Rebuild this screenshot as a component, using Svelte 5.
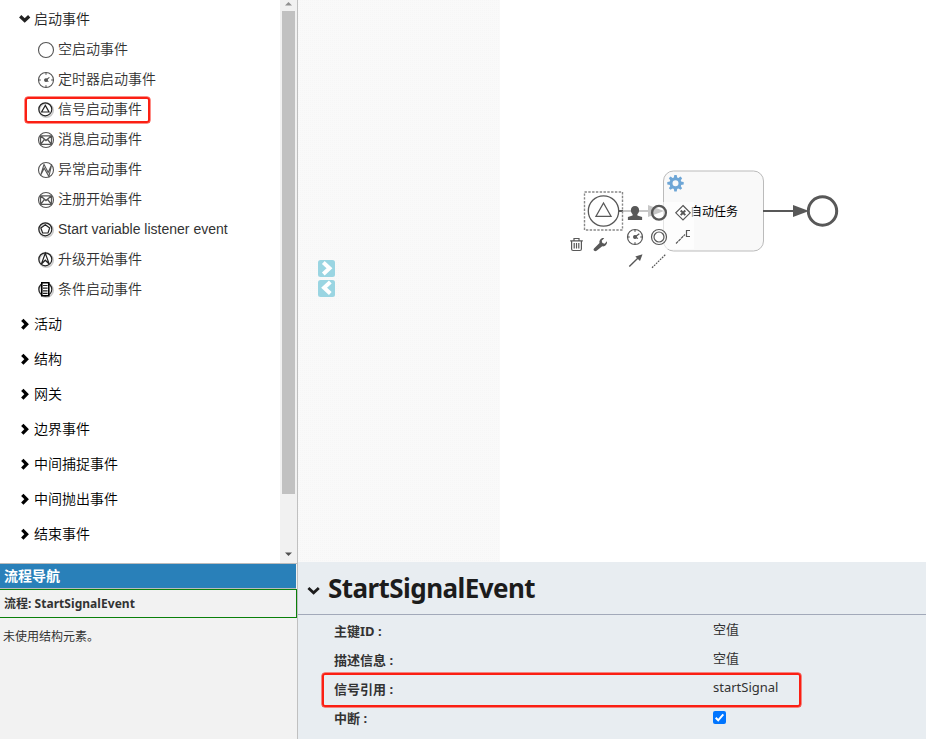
<script>
  const events = [
    { kind: 'none', label: '空启动事件' },
    { kind: 'timer', label: '定时器启动事件' },
    { kind: 'signal', label: '信号启动事件', marked: true },
    { kind: 'message', label: '消息启动事件' },
    { kind: 'error', label: '异常启动事件' },
    { kind: 'message', label: '注册开始事件' },
    { kind: 'variable', label: 'Start variable listener event' },
    { kind: 'escalation', label: '升级开始事件' },
    { kind: 'condition', label: '条件启动事件' }
  ];
  const groups = ['活动', '结构', '网关', '边界事件', '中间捕捉事件', '中间抛出事件', '结束事件'];
  const props = [
    { label: '主键ID :', value: '空值' },
    { label: '描述信息 :', value: '空值' },
    { label: '信号引用 :', value: 'startSignal', marked: true },
    { label: '中断 :', check: true }
  ];
  const teeth = [0, 45, 90, 135, 180, 225, 270, 315];
  const ticks = [0, 90, 180, 270];
  const dark = ['signal', 'variable', 'escalation', 'condition'];
</script>

<div class="app">
  <div class="left">
    <div class="palette">
      <div class="tree">
        <div class="row root">
          <svg class="chev" width="12" height="12" viewBox="0 0 12 12"><path d="M1.2 3.2 5.7 7.4l4.5-4.2" /></svg>
          <span>启动事件</span>
        </div>
        {#each events as e}
          <div class="row item">
            {#if e.marked}<div class="mark"></div>{/if}
            <svg class="ico" class:dark={dark.includes(e.kind)} width="18" height="18" viewBox="0 0 18 18">
              {#if dark.includes(e.kind)}
                <circle class="shade" cx="9.3" cy="9.3" r="6.9" />
                <circle cx="8.3" cy="8.3" r="6.5" />
              {:else}
                <circle cx="9" cy="9" r="7.5" />
              {/if}
              {#if e.kind === 'timer'}
                {#each ticks as t}<path d="M9 1.5v2.3" transform="rotate({t} 9 9)" />{/each}
                <path d="M12.4 6.4 9 9l2.4 1.6" />
                <circle class="fill" cx="9" cy="9.1" r="1.4" />
              {:else if e.kind === 'signal'}
                <path d="M8.3 4.4 12 11H4.6Z" />
              {:else if e.kind === 'message'}
                <path stroke-width="1.3" d="M3.5 4.8h11v8.6h-11ZM3.5 4.8 9 9.6l5.5-4.8M3.5 13.4 7.4 8.5M14.5 13.4l-3.9-4.9" />
              {:else if e.kind === 'error'}
                <path d="M3.6 14.3 7 3.4l4.2 8 3.5-8-2.8 12L7.2 7.2Z" />
              {:else if e.kind === 'variable'}
                <path d="M8.3 3.8 12.7 7l-1.7 5H5.6L3.9 7Z" />
              {:else if e.kind === 'escalation'}
                <path d="M8.3 2.3 4.4 13l3.9-3.8 3.9 3.8Z" />
              {:else if e.kind === 'condition'}
                <path class="paper" d="M4.8 1.8h7v13h-7Z" />
                <path d="M6 4.5h4.6M6 7.2h4.6M6 9.8h4.6M6 12.4h4.6" />
              {/if}
            </svg>
            <span>{e.label}</span>
          </div>
        {/each}
        <div class="groups">
          {#each groups as g}
            <div class="row group">
              <svg class="chev" width="12" height="12" viewBox="0 0 12 12"><path d="M3.3 1.8 7.6 6.2 3.3 10.6" /></svg>
              <span>{g}</span>
            </div>
          {/each}
        </div>
      </div>
      <div class="scroll">
        <svg width="17" height="11" viewBox="0 0 17 11"><path fill="#909090" d="M5 5.5 8.5 2 12 5.5Z" /></svg>
        <div class="thumb"></div>
        <svg class="down" width="17" height="17" viewBox="0 0 17 17"><path fill="#505050" d="M5 6.5h7L8.5 10Z" /></svg>
      </div>
    </div>
    <div class="nav">
      <div class="navhead">流程导航</div>
      <div class="process">流程: <span>StartSignalEvent</span></div>
      <p>未使用结构元素。</p>
    </div>
  </div>

  <div class="right">
    <svg class="canvas" width="628" height="562" viewBox="298 0 628 562">
      <defs>
        <pattern id="grid" width="2" height="2" patternUnits="userSpaceOnUse">
          <rect width="2" height="2" fill="#f9f9f9" />
          <rect width="1" height="1" fill="#f6f6f6" />
        </pattern>
      </defs>
      <rect x="298" y="0" width="202" height="562" fill="url(#grid)" />
      <g>
        <rect x="318" y="260" width="17" height="17" rx="2.5" fill="#9ad5e2" />
        <path d="M323.3 262.5 329.5 268.3 323.3 274" fill="none" stroke="#fff" stroke-width="4" />
        <rect x="318" y="280" width="17" height="17" rx="2.5" fill="#9ad5e2" />
        <path d="M330.3 282 324.1 287.8 330.3 293.5" fill="none" stroke="#fff" stroke-width="4" />
      </g>

      <rect x="663.5" y="171" width="100" height="80" rx="10" fill="#f9f9f9" stroke="#bbb" />
      <g transform="translate(675.5 183.2)" fill="#6ea6d6">
        {#each teeth as t}<path d="M-1.8-5-1.2-8.2H1.2L1.8-5Z" transform="rotate({t})" />{/each}
        <path fill-rule="evenodd" d="M0-6A6 6 0 1 1 0 6 6 6 0 1 1 0-6ZM0-3A3 3 0 1 0 0 3 3 3 0 1 0 0-3Z" />
      </g>
      <text x="690" y="216" class="task">自动任务</text>

      <path d="M620 211h30" stroke="#c7c7c7" stroke-width="2" />
      <path d="M619 211h4" stroke="#585858" stroke-width="2" />
      <path d="M648 205 664 211 648 217Z" fill="#c7c7c7" />
      <path d="M763 211h32" stroke="#585858" stroke-width="2" />
      <path d="M793 205 809 211 793 217Z" fill="#585858" />
      <circle cx="822.5" cy="211" r="14.2" fill="#fff" stroke="#585858" stroke-width="3" />

      <rect x="584.5" y="192" width="38" height="38" fill="none" stroke="#888" stroke-width="1.4" stroke-dasharray="2.4 1.4" />
      <circle cx="603.5" cy="211" r="15.2" fill="#fff" stroke="#585858" stroke-width="1.3" />
      <path d="M603.5 203 611 216.3H596Z" fill="none" stroke="#585858" stroke-width="1.3" />

      <rect x="663" y="202" width="31" height="47" fill="#fff" opacity=".6" />
      <g fill="#585858">
        <path d="M635 206c2.7 0 4.1 1.7 4.1 4 0 2-.9 3.6-1.7 4.3v1.2l4.7 1.4v3h-14.2v-3l4.7-1.4v-1.2c-.8-.7-1.7-2.3-1.7-4.3 0-2.3 1.4-4 4.1-4Z" />
        <path d="M642.5 254.2 640 261 635.3 256.6Z" />
        <path d="M594 248.6 599.5 243c-.7-2.5 1.7-5.6 4.7-4.8l-2.5 2.5.7 2.3 2.3.7 2.2-2.4c.7 3-2 5.6-4.7 5l-5.6 4.4c-1.8 1.4-4.1-.5-2.6-2.1Z" />
      </g>
      <g fill="none" stroke="#585858" stroke-width="1.2">
        <circle cx="659" cy="212.8" r="6.9" stroke-width="2.3" />
        <path d="M683 205.5 690.2 212.8 683 220 675.8 212.8Z" fill="#fff" />
        <path d="M680.7 210.5l4.6 4.6M685.3 210.5l-4.6 4.6" stroke-width="2" />
        <circle cx="635" cy="237" r="7.5" />
        {#each ticks as t}<path d="M635 229.7v2" transform="rotate({t} 635 237)" />{/each}
        <path d="M639.3 233.7 635 237l3 1.5" />
        <circle cx="635" cy="237" r="1.4" fill="#585858" />
        <circle cx="659" cy="237" r="7.5" />
        <circle cx="659" cy="237" r="5" />
        <path d="M676 243.5 685 234.5" stroke-dasharray="3 .6" />
        <path d="M690 230.5h-3.5v6h3.5" />
        <path d="M629.3 266.5 638 258" stroke-width="1.4" />
        <path d="M652 267.8 666 254" stroke-dasharray="1.8 1" />
        <path d="M570.2 240.8h12.6M574 240.5v-2h5v2M571.6 241v8q0 1.5 1.5 1.5h6.8q1.5 0 1.5-1.5V241M574.2 243v5.5M576.5 243v5.5M578.8 243v5.5" />
      </g>
    </svg>

    <div class="details">
      <div class="title">
        <svg width="14" height="10" viewBox="0 0 14 10"><path d="M1.4 2 6.6 6.8l5.2-4.8" fill="none" stroke="#1c1c1c" stroke-width="2.8" /></svg>
        <h1>StartSignalEvent</h1>
      </div>
      <div class="props">
        {#each props as p}
          <div class="prop">
            {#if p.marked}<div class="pmark"></div>{/if}
            <span class="name">{p.label}</span>
            {#if p.check}
              <svg class="check" width="13" height="13" viewBox="0 0 13 13"><rect width="13" height="13" rx="2" fill="#0075ff" /><path d="M2.7 6.8 5.2 9.3 10.3 3.3" fill="none" stroke="#fff" stroke-width="2" /></svg>
            {:else}
              <span class="value">{p.value}</span>
            {/if}
          </div>
        {/each}
      </div>
    </div>
  </div>
</div>

<style>
  .app {
    display: flex;
    width: 926px;
    height: 739px;
    overflow: hidden;
    background: #fff;
    color: #333;
    font-family: 'Liberation Sans', 'Noto Sans CJK SC', sans-serif;
  }
  .left {
    box-sizing: border-box;
    width: 298px;
    display: flex;
    flex-direction: column;
    border-right: 1px solid #c0c0c0;
  }
  .palette {
    height: 563px;
    display: flex;
  }
  .tree {
    flex: 1;
    padding-top: 4px;
    font-weight: 350;
  }
  .row {
    position: relative;
    display: flex;
    align-items: center;
    height: 30px;
    font-size: 14px;
    line-height: 20px;
    white-space: nowrap;
  }
  .root,
  .group {
    padding-left: 19px;
    gap: 3px;
  }
  .root {
    color: #222;
  }
  .group {
    color: #000;
    height: 35px;
  }
  .groups {
    padding-top: 2.5px;
  }
  .item {
    padding-left: 37px;
    gap: 3px;
  }
  .chev path {
    fill: none;
    stroke: currentColor;
    stroke-width: 3.3;
  }
  .ico {
    position: relative;
    top: 1px;
    fill: none;
    stroke: #555;
    stroke-width: 1.1;
  }
  .ico.dark {
    top: 0.5px;
    stroke: #222;
    stroke-width: 1.2;
  }
  .ico .shade {
    stroke: #ccc;
    stroke-width: 1.8;
  }
  .ico .fill {
    fill: #555;
  }
  .ico .paper {
    fill: #fff;
    stroke: #000;
    stroke-width: 1.6;
  }
  .mark {
    box-sizing: border-box;
    position: absolute;
    left: 24.5px;
    top: 2.5px;
    width: 125px;
    height: 26px;
    border: 2px solid #fb1f13;
    border-radius: 3px;
    box-shadow: 0 0 0 0.5px #fb1f13;
  }
  .scroll {
    width: 17px;
    display: flex;
    flex-direction: column;
    background: #f1f1f1;
  }
  .scroll svg {
    display: block;
  }
  .thumb {
    width: 13px;
    height: 483px;
    margin-left: 2px;
    background: #c1c1c1;
  }
  .scroll .down {
    margin-top: auto;
  }
  .nav {
    flex: 1;
    background: #f2f2f2;
    border-top: 1px solid #bbb;
    font-family: 'Noto Sans', 'Noto Sans CJK SC', sans-serif;
    font-size: 12px;
  }
  .navhead {
    height: 24px;
    line-height: 24px;
    padding-left: 4px;
    margin-right: 1px;
    background: #2980b9;
    border-bottom: 1px solid #bbb;
    color: #fff;
    font-size: 14px;
    font-weight: bold;
  }
  .process {
    height: 27px;
    line-height: 28px;
    padding-left: 4px;
    border: 1px solid #0a800a;
    border-left: 0;
    font-weight: bold;
  }
  .process span {
    letter-spacing: 0.05px;
  }
  .nav p {
    margin: 10px 0 0 3px;
    line-height: 18px;
  }
  .right {
    width: 628px;
    display: flex;
    flex-direction: column;
  }
  .canvas {
    display: block;
  }
  .task {
    font-size: 12px;
    fill: #000;
  }
  .details {
    flex: 1;
    background: #e8edf1;
    font-family: 'Noto Sans', 'Noto Sans CJK SC', sans-serif;
  }
  .title {
    box-sizing: border-box;
    height: 53px;
    display: flex;
    align-items: center;
    padding-left: 9px;
    gap: 7px;
    border-bottom: 1px solid #a2a9b9;
  }
  .title svg {
    position: relative;
    top: 3px;
  }
  h1 {
    margin: 0;
    font-size: 26px;
    line-height: 52px;
    font-weight: bold;
    letter-spacing: -0.56px;
    color: #1c1c1c;
  }
  .props {
    padding-top: 1px;
  }
  .prop {
    position: relative;
    display: flex;
    align-items: center;
    height: 29px;
    padding-left: 36px;
    font-size: 13px;
    line-height: 20px;
  }
  .name {
    width: 379px;
    font-weight: bold;
  }
  .value {
    position: relative;
    top: -2px;
  }
  .pmark {
    box-sizing: border-box;
    position: absolute;
    left: 23.5px;
    top: -1.5px;
    width: 479px;
    height: 34px;
    border: 2px solid #fb1f13;
    border-radius: 3px;
    box-shadow: 0 0 0 0.5px #fb1f13;
  }
</style>
